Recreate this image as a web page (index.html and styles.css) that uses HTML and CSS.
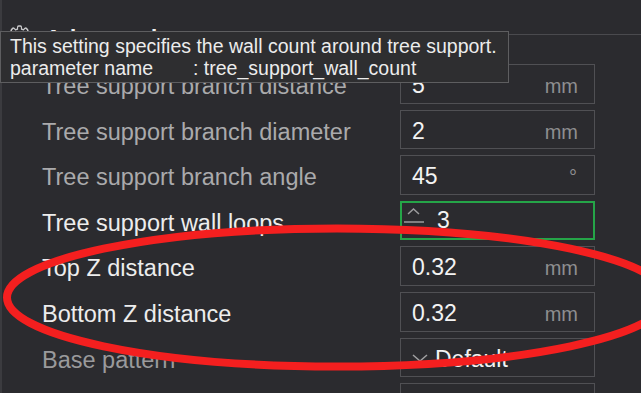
FILE: index.html
```html
<!DOCTYPE html>
<html>
<head>
<meta charset="utf-8">
<link rel="stylesheet" href="styles.css">
</head>
<body>
<div class="panel">
  <div class="section-head">
    <svg class="gear" width="25" height="25" viewBox="0 0 25 25">
      <g class="gear-outer">
        <circle cx="12.5" cy="12.5" r="8.6"/>
        <rect x="10" y="1.2" width="5" height="6" rx="1.6"/>
        <rect x="10" y="1.2" width="5" height="6" rx="1.6" transform="rotate(45 12.5 12.5)"/>
        <rect x="10" y="1.2" width="5" height="6" rx="1.6" transform="rotate(90 12.5 12.5)"/>
        <rect x="10" y="1.2" width="5" height="6" rx="1.6" transform="rotate(135 12.5 12.5)"/>
        <rect x="10" y="1.2" width="5" height="6" rx="1.6" transform="rotate(180 12.5 12.5)"/>
        <rect x="10" y="1.2" width="5" height="6" rx="1.6" transform="rotate(225 12.5 12.5)"/>
        <rect x="10" y="1.2" width="5" height="6" rx="1.6" transform="rotate(270 12.5 12.5)"/>
        <rect x="10" y="1.2" width="5" height="6" rx="1.6" transform="rotate(315 12.5 12.5)"/>
      </g>
      <g class="gear-inner">
        <circle cx="12.5" cy="12.5" r="7.1"/>
        <rect x="11.1" y="2.7" width="2.8" height="6" rx="0.8"/>
        <rect x="11.1" y="2.7" width="2.8" height="6" rx="0.8" transform="rotate(45 12.5 12.5)"/>
        <rect x="11.1" y="2.7" width="2.8" height="6" rx="0.8" transform="rotate(90 12.5 12.5)"/>
        <rect x="11.1" y="2.7" width="2.8" height="6" rx="0.8" transform="rotate(135 12.5 12.5)"/>
        <rect x="11.1" y="2.7" width="2.8" height="6" rx="0.8" transform="rotate(180 12.5 12.5)"/>
        <rect x="11.1" y="2.7" width="2.8" height="6" rx="0.8" transform="rotate(225 12.5 12.5)"/>
        <rect x="11.1" y="2.7" width="2.8" height="6" rx="0.8" transform="rotate(270 12.5 12.5)"/>
        <rect x="11.1" y="2.7" width="2.8" height="6" rx="0.8" transform="rotate(315 12.5 12.5)"/>
      </g>
      <circle class="gear-hole" cx="12.5" cy="12.5" r="3.2"/>
    </svg>
    <span class="section-title">Advanced</span>
    <span class="section-line"></span>
  </div>

  <div class="rows">
    <div class="row">
      <span class="label dim">Tree support branch distance</span>
      <div class="field"><span class="val">5</span><span class="unit">mm</span></div>
    </div>
    <div class="row">
      <span class="label dim">Tree support branch diameter</span>
      <div class="field"><span class="val">2</span><span class="unit">mm</span></div>
    </div>
    <div class="row">
      <span class="label dim">Tree support branch angle</span>
      <div class="field"><span class="val">45</span><span class="unit deg">°</span></div>
    </div>
    <div class="row">
      <span class="label">Tree support wall loops</span>
      <div class="field field-active">
        <svg class="spin" width="22" height="16" viewBox="0 0 22 16">
          <polyline points="5,6 10.5,1 16,6" />
          <line x1="1" y1="14" x2="21" y2="14" />
        </svg>
        <span class="val">3</span>
      </div>
    </div>
    <div class="row">
      <span class="label">Top Z distance</span>
      <div class="field"><span class="val">0.32</span><span class="unit">mm</span></div>
    </div>
    <div class="row">
      <span class="label">Bottom Z distance</span>
      <div class="field"><span class="val">0.32</span><span class="unit">mm</span></div>
    </div>
    <div class="row">
      <span class="label dimmer">Base pattern</span>
      <div class="field field-combo">
        <svg class="chev" width="16" height="8" viewBox="0 0 16 8">
          <polyline points="1,1 8,7 15,1" />
        </svg>
        <span class="val">Default</span>
      </div>
    </div>
    <div class="row">
      <span class="label"></span>
      <div class="field"></div>
    </div>
  </div>
</div>

<div class="tooltip">
  <div class="tip-line">This setting specifies the wall count around tree support.</div>
  <div class="tip-line"><span class="tip-key">parameter name</span>: tree_support_wall_count</div>
</div>

<svg class="annotation" width="641" height="393" viewBox="0 0 641 393">
  <ellipse cx="337" cy="297.5" rx="330" ry="69" />
</svg>
</body>
</html>
```

FILE: styles.css
```css
html, body {
  margin: 0;
  padding: 0;
}

body {
  width: 641px;
  height: 393px;
  overflow: hidden;
  position: relative;
  background: #2b2b2f;
  font-family: "Liberation Sans", Arial, sans-serif;
  color: #ececec;
}

.panel {
  box-sizing: border-box;
  height: 393px;
  overflow: hidden;
  padding-top: 22px;
  border-left: 2px solid #3b3b3f;
}

.section-head {
  display: flex;
  align-items: center;
  height: 28px;
  padding-left: 5px;
}

.gear {
  flex: none;
  display: block;
}

.gear-outer {
  fill: #c9c9cb;
}

.gear-inner {
  fill: #2b2b2f;
}

.gear-hole {
  fill: none;
  stroke: #c9c9cb;
  stroke-width: 1.4;
}

.section-title {
  margin-left: 13px;
  margin-top: 5px;
  font-size: 23.5px;
  font-weight: bold;
  color: #f0f0f0;
  line-height: 28px;
}

.section-line {
  flex: 1;
  height: 1px;
  margin-left: 10px;
  margin-bottom: 3px;
  background: #4a4a4e;
}

.rows {
  display: grid;
  row-gap: 6px;
  margin-top: 14px;
  padding-left: 40px;
}

.row {
  display: grid;
  grid-template-columns: 358px 195px;
  height: 39.6px;
  align-items: start;
}

.label {
  padding-top: 11px;
  font-size: 23.5px;
  line-height: 1;
  color: #ededed;
  white-space: nowrap;
}

.label.dim {
  color: #aaaaac;
}

.label.dimmer {
  color: #9a9a9c;
}

.field {
  box-sizing: border-box;
  height: 39.6px;
  border: 1px solid #505054;
  display: flex;
  align-items: baseline;
  padding: 9px 16px 0 11px;
}

.val {
  font-size: 23px;
  line-height: 1;
  color: #f3f3f3;
}

.unit {
  margin-left: auto;
  font-size: 20px;
  line-height: 1;
  color: #8e8e90;
}

.unit.deg {
  margin-right: 1px;
}

.field-active {
  border: 2px solid #25a548;
  padding: 6px 10px 0 1px;
  align-items: flex-start;
}

.spin {
  display: block;
  margin-top: -1px;
  margin-right: 12px;
  flex: none;
}

.spin polyline,
.spin line {
  fill: none;
  stroke: #9c9c9e;
  stroke-width: 1.5;
}

.field-combo {
  align-items: flex-start;
  padding: 9px 10px 0 11px;
}

.chev {
  display: block;
  margin-top: 6px;
  margin-right: 7px;
  flex: none;
}

.chev polyline {
  fill: none;
  stroke: #a0a0a2;
  stroke-width: 1.5;
}

.tooltip {
  position: absolute;
  left: 0;
  top: 31px;
  width: 509px;
  height: 52px;
  box-sizing: border-box;
  padding: 3px 9px;
  background: #2e2e30;
  border: 1px solid #5e5e60;
  font-size: 19.5px;
  line-height: 22px;
  color: #ececec;
  white-space: nowrap;
}

.tip-key {
  display: inline-block;
  width: 183px;
}

.annotation {
  position: absolute;
  left: 0;
  top: 0;
  pointer-events: none;
}

.annotation ellipse {
  fill: none;
  stroke: #f41f1f;
  stroke-width: 8;
}
```
